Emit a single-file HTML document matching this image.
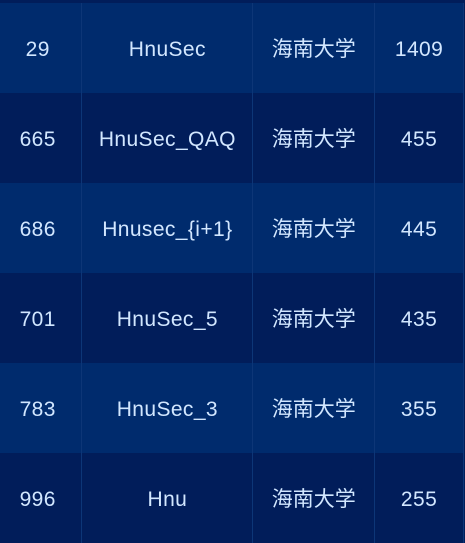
<!DOCTYPE html>
<html><head><style>
body{margin:0;width:465px;height:537px;overflow:hidden;background:#011d5a;font-family:"Liberation Sans","Noto Sans CJK SC",sans-serif;}
table{position:absolute;top:3px;left:0;border-collapse:collapse;width:464px;}
td{height:90px;padding:3px 0 0 0;box-sizing:border-box;text-align:center;color:#d2e7ff;font-size:21px;line-height:24px;border-right:1px solid #0d3677;vertical-align:middle;}
td span{display:inline-block;line-height:24px;height:24px;vertical-align:top;}
td.l{letter-spacing:0.4px;}
td.f{padding-right:6px;}
tr:nth-child(odd) td{background:#002b6d;}
tr:nth-child(even) td{background:#011d5a;}
</style></head><body>
<table>
<colgroup><col style="width:82px"><col style="width:171px"><col style="width:122px"><col style="width:89px"></colgroup>
<tr><td class="l f"><span>29</span></td><td class="l"><span>HnuSec</span></td><td><span>海南大学</span></td><td class="l"><span>1409</span></td></tr>
<tr><td class="l f"><span>665</span></td><td class="l"><span>HnuSec_QAQ</span></td><td><span>海南大学</span></td><td class="l"><span>455</span></td></tr>
<tr><td class="l f"><span>686</span></td><td class="l"><span>Hnusec_{i+1}</span></td><td><span>海南大学</span></td><td class="l"><span>445</span></td></tr>
<tr><td class="l f"><span>701</span></td><td class="l"><span>HnuSec_5</span></td><td><span>海南大学</span></td><td class="l"><span>435</span></td></tr>
<tr><td class="l f"><span>783</span></td><td class="l"><span>HnuSec_3</span></td><td><span>海南大学</span></td><td class="l"><span>355</span></td></tr>
<tr><td class="l f"><span>996</span></td><td class="l"><span>Hnu</span></td><td><span>海南大学</span></td><td class="l"><span>255</span></td></tr>
</table>
</body></html>
